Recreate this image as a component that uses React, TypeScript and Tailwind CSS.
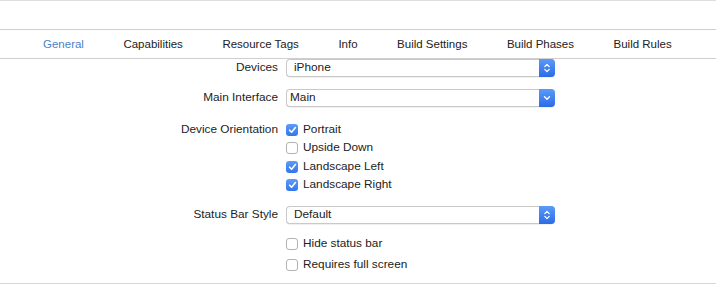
import React from "react";

const font = { fontFamily: '"Liberation Sans", Arial, sans-serif' };

function Stepper({ single }: { single?: boolean }) {
  return (
    <div className="w-[16px] h-full rounded-r-[4px] bg-gradient-to-b from-[#5a9bf8] to-[#2c6ae6] flex items-center justify-center">
      {single ? (
        <svg width="8" height="6" viewBox="0 0 8 6">
          <path d="M1.5 1.8 L4 4.2 L6.5 1.8" stroke="white" strokeWidth="1.4" fill="none" strokeLinecap="round" strokeLinejoin="round" />
        </svg>
      ) : (
        <svg width="8" height="12" viewBox="0 0 8 12">
          <path d="M1.8 4.6 L4 2.4 L6.2 4.6" stroke="white" strokeWidth="1.3" fill="none" strokeLinecap="round" strokeLinejoin="round" />
          <path d="M1.8 7.4 L4 9.6 L6.2 7.4" stroke="white" strokeWidth="1.3" fill="none" strokeLinecap="round" strokeLinejoin="round" />
        </svg>
      )}
    </div>
  );
}

function Popup({ value, single, padded }: { value: string; single?: boolean; padded?: boolean }) {
  return (
    <div className="w-[269px] h-[18px] flex rounded-[4px] border border-[#c9c9c9] border-r-0 bg-white shadow-[0_0.5px_0.5px_rgba(0,0,0,0.12)]">
      <div className={`flex-1 flex items-center text-[11.8px] text-[#222] ${padded ? "pl-[7px]" : "pl-[3px]"}`}>{value}</div>
      <div className="-my-px h-[18px]">
        <Stepper single={single} />
      </div>
    </div>
  );
}

function Check({ checked, label }: { checked?: boolean; label: string }) {
  return (
    <div className="flex items-center gap-[5px] h-full">
      {checked ? (
        <div className="w-[12px] h-[12px] rounded-[3px] bg-gradient-to-b from-[#5d9cf8] to-[#3276ec] flex items-center justify-center">
          <svg width="9" height="8" viewBox="0 0 9 8">
            <path d="M1.6 4.2 L3.6 6.2 L7.4 1.6" stroke="white" strokeWidth="1.6" fill="none" strokeLinecap="round" strokeLinejoin="round" />
          </svg>
        </div>
      ) : (
        <div className="w-[12px] h-[12px] rounded-[3px] border border-[#b2b2b2] bg-white" />
      )}
      <span className="text-[11.8px] text-[#222]">{label}</span>
    </div>
  );
}

function Row({ label, children, h, mt }: { label?: string; children: React.ReactNode; h: string; mt?: string }) {
  return (
    <div className={`flex items-center ${h} ${mt ?? ""}`}>
      <div className="w-[278px] text-right text-[11.8px] text-[#222] pr-0">{label}</div>
      <div className="ml-[8px] h-full flex items-center">{children}</div>
    </div>
  );
}

export default function App() {
  const tabs = ["General", "Capabilities", "Resource Tags", "Info", "Build Settings", "Build Phases", "Build Rules"];
  return (
    <div className="w-[716px] h-[299px] bg-white overflow-hidden" style={font}>
      <div className="h-[1px] bg-[#dedede]" />
      <div className="h-[28px] bg-white" />
      <div className="h-[30px] border-t border-b border-[#cfcfcf] flex items-center pt-[2px] pl-[43px] gap-[39.5px]">
        {tabs.map((t, i) => (
          <span key={t} className={`text-[11.5px] ${i === 0 ? "text-[#4a82c8]" : "text-[#222]"}`}>
            {t}
          </span>
        ))}
      </div>
      <div className="flex flex-col">
        <Row label="Devices" h="h-[18px]">
          <Popup value="iPhone" padded />
        </Row>
        <Row label="Main Interface" h="h-[18px]" mt="mt-[12px]">
          <Popup value="Main" single />
        </Row>
        <Row label="Device Orientation" h="h-[18px]" mt="mt-[14px]">
          <Check checked label="Portrait" />
        </Row>
        <Row h="h-[18.5px]">
          <Check label="Upside Down" />
        </Row>
        <Row h="h-[18.5px]">
          <Check checked label="Landscape Left" />
        </Row>
        <Row h="h-[18.5px]">
          <Check checked label="Landscape Right" />
        </Row>
        <Row label="Status Bar Style" h="h-[18px]" mt="mt-[11px]">
          <Popup value="Default" padded />
        </Row>
        <Row h="h-[18px]" mt="mt-[11px]">
          <Check label="Hide status bar" />
        </Row>
        <Row h="h-[18px]" mt="mt-[3px]">
          <Check label="Requires full screen" />
        </Row>
      </div>
      <div className="mt-[9px] h-px bg-[#d6d6d6]" />
    </div>
  );
}
